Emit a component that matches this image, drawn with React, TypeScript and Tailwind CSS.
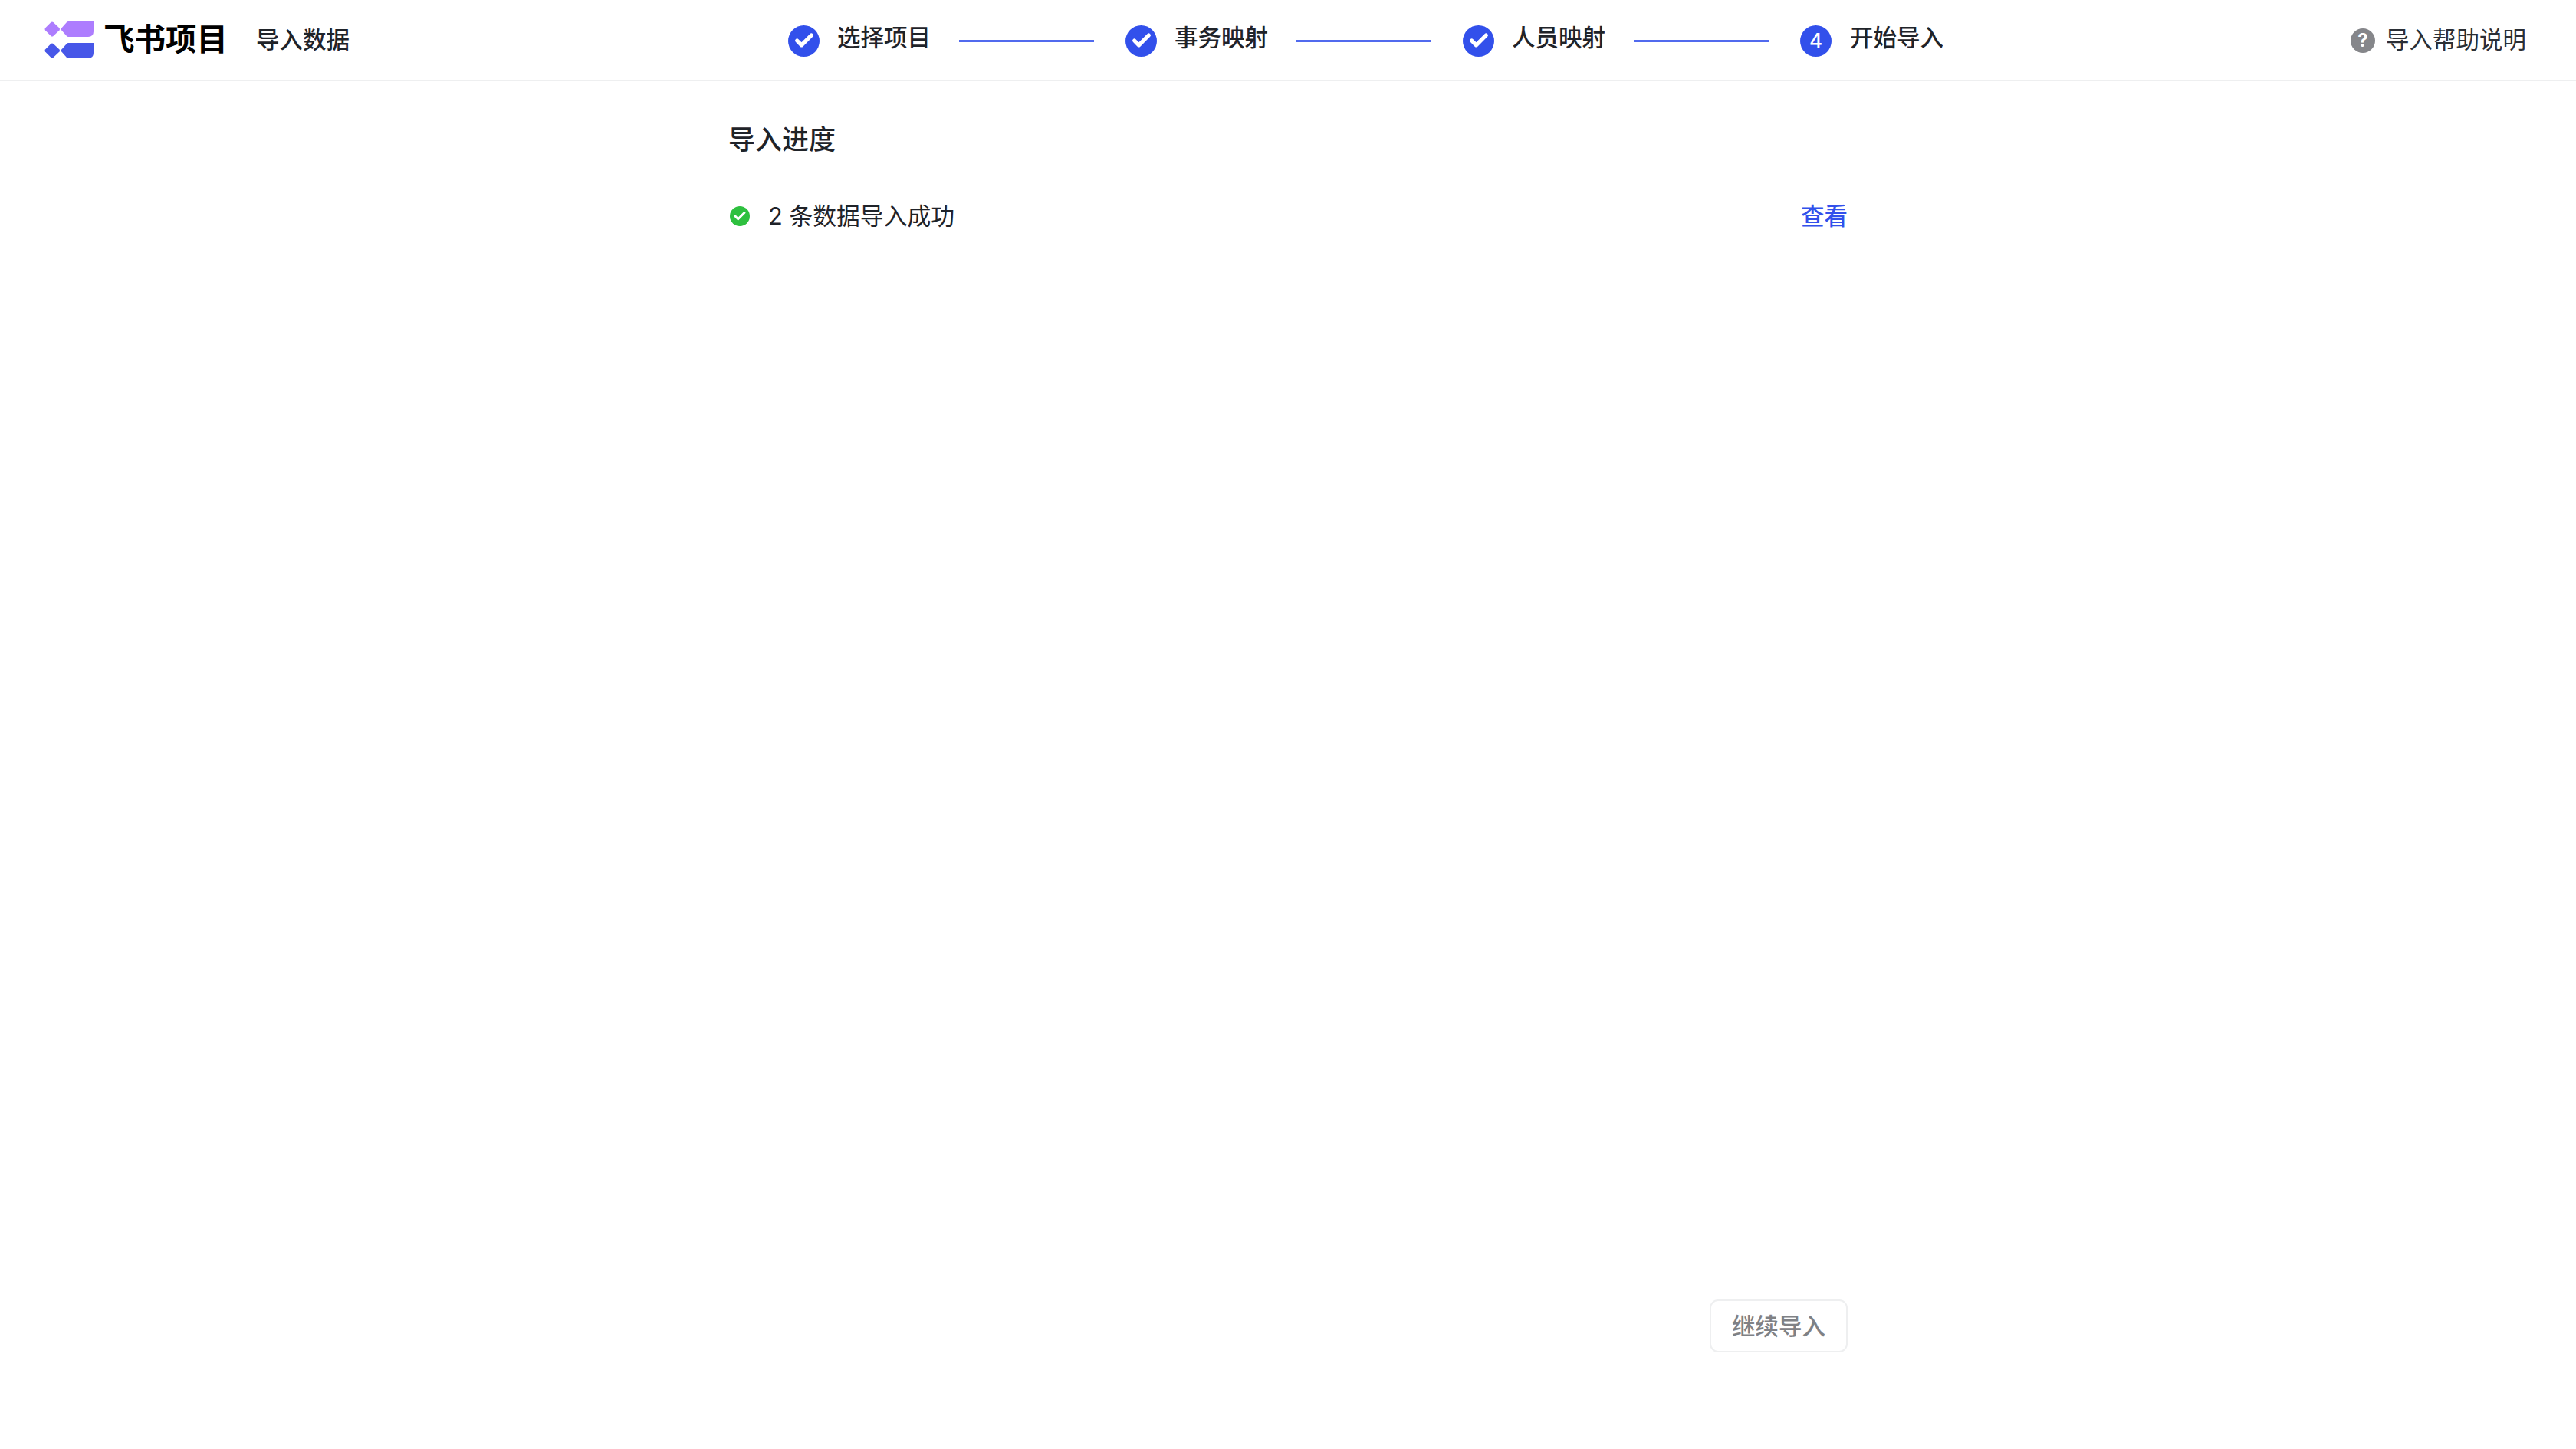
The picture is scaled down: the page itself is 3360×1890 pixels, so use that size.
import { Check } from 'lucide-react'

const font = 'font-["Inter","Noto_Sans_CJK_SC",sans-serif]'

function Logo() {
  return (
    <svg width="64" height="48" viewBox="0 0 64 48" className="shrink-0">
      <path d="M8.5 1 Q10 0 11.5 1 L19.5 8.5 Q20.5 10 19.5 11.5 L11.5 19 Q10 20 8.5 19 L1 11.5 Q0 10 1 8.5 Z" fill="#AD7DFE" />
      <path d="M31 0 H64 V13 Q64 20 57 20 H31 Q30 20 29 19 L21 10 L29 1 Q30 0 31 0 Z" fill="#AD7DFE" />
      <path d="M8.5 29 Q10 28 11.5 29 L19.5 36.5 Q20.5 38 19.5 39.5 L11.5 47 Q10 48 8.5 47 L1 39.5 Q0 38 1 36.5 Z" fill="#4757E8" />
      <path d="M31 28 H64 V41 Q64 48 57 48 H31 Q30 48 29 47 L21 38 L29 29 Q30 28 31 28 Z" fill="#4757E8" />
    </svg>
  )
}

function Step({ label, num }: { label: string; num?: number }) {
  return (
    <div className={`flex items-center ${num ? 'gap-[24px]' : 'gap-[23px]'}`}>
      <div className="w-[41px] h-[41px] rounded-full bg-[#3250EB] flex items-center justify-center text-white shrink-0 mt-[2px]">
        {num ? <span className="text-[26px] font-medium leading-none">{num}</span> : <Check size={28} strokeWidth={4.5} />}
      </div>
      <span className="text-[30.5px] font-medium leading-[40px] text-[#1F2329] -mt-[6px]">{label}</span>
    </div>
  )
}

function Line() {
  return <div className="w-[176px] h-[3px] bg-[#3250EB] ml-[37px] mr-[41px] shrink-0 mt-[2px] opacity-85" />
}

export default function App() {
  return (
    <div className={`${font} min-h-[1890px] bg-white flex flex-col`}>
      <header className="h-[106px] border-b-2 border-[#EEEFF0] flex items-center pl-[58px] pr-[65px]">
        <div className="flex items-center w-[970px] shrink-0">
          <Logo />
          <span className="ml-[13px] text-[40.5px] font-bold leading-none text-black">飞书项目</span>
          <span className="ml-[37px] text-[30.5px] font-medium leading-none text-[#1F2329]">导入数据</span>
        </div>
        <div className="flex items-center">
          <Step label="选择项目" />
          <Line />
          <Step label="事务映射" />
          <Line />
          <Step label="人员映射" />
          <Line />
          <Step label="开始导入" num={4} />
        </div>
        <div className="ml-auto flex items-center gap-[14px]">
          <div className="w-[32px] h-[32px] mt-[2px] rounded-full bg-[#85868A] flex items-center justify-center text-white text-[24px] font-bold leading-none">?</div>
          <span className="text-[30.5px] leading-none text-[#2B2F36]">导入帮助说明</span>
        </div>
      </header>

      <main className="w-[1460px] mx-auto flex-1 flex flex-col">
        <h1 className="mt-[54px] text-[35px] font-medium leading-[44px] text-[#1F2329]">导入进度</h1>
        <div className="mt-[56px] flex items-center justify-between h-[44px]">
          <div className="flex items-center">
            <div className="ml-[2px] w-[26px] h-[26px] rounded-full bg-[#2EC03F] flex items-center justify-center text-white">
              <Check size={18} strokeWidth={4} />
            </div>
            <span className="ml-[24px] text-[30.8px] leading-none text-[#1F2329]">2 条数据导入成功</span>
          </div>
          <span className="text-[30.5px] font-medium leading-none text-[#3250EB]">查看</span>
        </div>
        <div className="mt-[1391px] flex justify-end">
          <button className="w-[180px] h-[69px] rounded-[11px] border-2 border-[#EEEFF0] bg-white text-[30.5px] font-medium text-[#7F8185]">
            继续导入
          </button>
        </div>
      </main>
    </div>
  )
}
